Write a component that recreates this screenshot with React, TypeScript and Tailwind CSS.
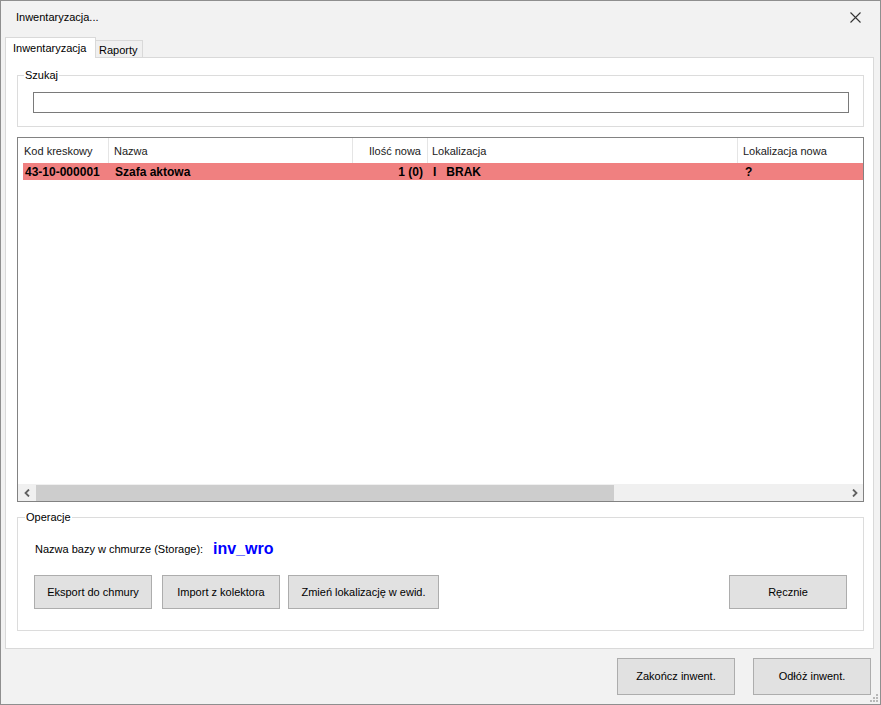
import React from 'react'

const btn =
  'h-full flex items-center justify-center bg-[#e1e1e1] border border-[#adadad] text-[11px] text-black'

const headCell = 'flex items-center pt-[2px]'

function Chevron({ dir }: { dir: 'left' | 'right' }) {
  return (
    <svg width="6" height="8" viewBox="0 0 6 8">
      <polyline
        points={dir === 'left' ? '5,0.5 1.5,4 5,7.5' : '1,0.5 4.5,4 1,7.5'}
        fill="none"
        stroke="#606060"
        strokeWidth="1.8"
      />
    </svg>
  )
}

export default function App() {
  return (
    <div className="relative w-[881px] h-[705px] border border-[#8f8f8f] bg-[#f2f2f2] flex flex-col font-['Liberation_Sans',Arial,sans-serif] text-[11px] text-black">
      {/* title bar */}
      <div className="h-[36px] flex items-start justify-between pl-[15px] pr-[19px] pt-[9px]">
        <span className="leading-[14px]">Inwentaryzacja...</span>
        <svg width="11" height="11" viewBox="0 0 11 11" className="mt-[2px]">
          <path d="M0.5 0.5 L10.5 10.5 M10.5 0.5 L0.5 10.5" stroke="#333" strokeWidth="1.1" />
        </svg>
      </div>

      {/* tabs */}
      <div className="h-[20px] flex items-end pl-[4px]">
        <div className="relative z-10 -mb-[1px] h-[21px] w-[91px] bg-white border border-b-0 border-[#d9d9d9] pl-[7px] pt-[3px] leading-[14px]">
          Inwentaryzacja
        </div>
        <div className="-ml-[1px] h-[17px] w-[48px] bg-[#f0f0f0] border border-b-0 border-[#d9d9d9] pl-[3px] pt-[2px] leading-[14px]">
          Raporty
        </div>
      </div>

      {/* panel */}
      <div className="ml-[4px] w-[869px] h-[592px] bg-white border border-[#d9d9d9] flex flex-col pl-[11px]">
        {/* Szukaj */}
        <div className="relative mt-[17px] w-[847px] h-[52px] border border-[#dcdcdc]">
          <span className="absolute left-[6px] -top-[8px] bg-white px-[1px] leading-[14px]">Szukaj</span>
          <div className="mt-[16px] ml-[15px] w-[816px] h-[21px] border border-[#7a7a7a] bg-white" />
        </div>

        {/* list */}
        <div className="mt-[10px] w-[847px] h-[365px] border border-[#828282] flex flex-col">
          <div className="h-[25px] flex text-[#1a1a1a]">
            <div className={`${headCell} w-[91px] pl-[6px] border-r border-[#e5e5e5]`}>Kod kreskowy</div>
            <div className={`${headCell} w-[244px] pl-[5px] border-r border-[#e5e5e5]`}>Nazwa</div>
            <div className={`${headCell} w-[75px] pr-[6px] justify-end border-r border-[#e5e5e5]`}>Ilość nowa</div>
            <div className={`${headCell} w-[310px] pl-[4px] border-r border-[#e5e5e5]`}>Lokalizacja</div>
            <div className={`${headCell} flex-1 pl-[5px]`}>Lokalizacja nowa</div>
          </div>
          <div className="ml-[5px] h-[17px] flex bg-[#f08080] font-bold text-[12px] leading-[17px] pt-[1px]">
            <div className="w-[86px] pl-[2px]">43-10-000001</div>
            <div className="w-[244px] pl-[6px]">Szafa aktowa</div>
            <div className="w-[75px] pr-[5px] text-right">1 (0)</div>
            <div className="w-[310px] pl-[5px] whitespace-pre">I   BRAK</div>
            <div className="flex-1 pl-[7px]">?</div>
          </div>
          <div className="flex-1" />
          <div className="h-[17px] flex bg-[#f0f0f0] pt-[1px]">
            <div className="w-[18px] flex items-center justify-center">
              <Chevron dir="left" />
            </div>
            <div className="w-[578px] bg-[#cdcdcd]" />
            <div className="flex-1" />
            <div className="w-[17px] flex items-center justify-center">
              <Chevron dir="right" />
            </div>
          </div>
        </div>

        {/* Operacje */}
        <div className="relative mt-[15px] w-[847px] h-[114px] border border-[#dcdcdc] flex flex-col">
          <span className="absolute left-[7px] -top-[8px] bg-white px-[1px] leading-[14px]">Operacje</span>
          <div className="mt-[21px] h-[20px] flex items-center pl-[17px]">
            <span className="w-[178px]">Nazwa bazy w chmurze (Storage):</span>
            <span className="text-[16px] font-bold text-[#0000ff]">inv_wro</span>
          </div>
          <div className="mt-[16px] h-[34px] flex pl-[16px] pr-[16px]">
            <div className={`${btn} w-[118px]`}>Eksport do chmury</div>
            <div className={`${btn} w-[118px] ml-[10px]`}>Import z kolektora</div>
            <div className={`${btn} w-[151px] ml-[8px]`}>Zmień lokalizację w ewid.</div>
            <div className={`${btn} w-[118px] ml-auto`}>Ręcznie</div>
          </div>
        </div>
      </div>

      {/* bottom buttons */}
      <div className="mt-[9px] h-[37px] flex justify-end gap-[18px] pr-[9px]">
        <div className={`${btn} w-[118px]`}>Zakończ inwent.</div>
        <div className={`${btn} w-[118px]`}>Odłóż inwent.</div>
      </div>

      {/* resize grip */}
      <svg width="8" height="8" viewBox="0 0 8 8" className="absolute right-[2px] bottom-[2px]">
        <rect x="6" y="0" width="2" height="2" fill="#b8b8b8" />
        <rect x="3" y="3" width="2" height="2" fill="#b8b8b8" />
        <rect x="6" y="3" width="2" height="2" fill="#b8b8b8" />
        <rect x="0" y="6" width="2" height="2" fill="#b8b8b8" />
        <rect x="3" y="6" width="2" height="2" fill="#b8b8b8" />
        <rect x="6" y="6" width="2" height="2" fill="#b8b8b8" />
      </svg>
    </div>
  )
}
